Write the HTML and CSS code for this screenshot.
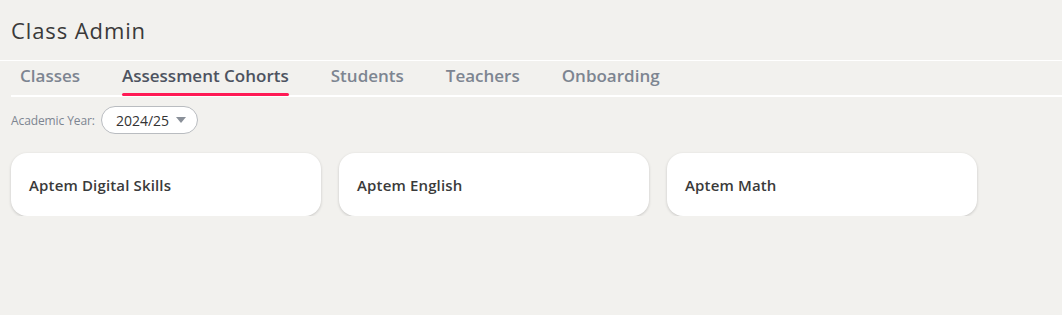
FILE: index.html
```html
<!DOCTYPE html>
<html lang="en">
<head>
    <meta charset="UTF-8">
    <meta name="viewport" content="width=device-width, initial-scale=1.0">
    <title>Class Admin</title>
    <link rel="stylesheet" href="styles.css">
</head>
<body>
    <header class="page-header">
        <h1>Class Admin</h1>
    </header>

    <nav class="tabs">
        <a class="tab">Classes</a>
        <a class="tab active">Assessment Cohorts</a>
        <a class="tab">Students</a>
        <a class="tab">Teachers</a>
        <a class="tab">Onboarding</a>
    </nav>

    <div class="filter-row">
        <label class="filter-label">Academic Year:</label>
        <div class="year-select">
            <span>2024/25</span>
            <svg width="10" height="6" viewBox="0 0 10 6"><path d="M0 0 L10 0 L5 6 Z" fill="#8a9099"/></svg>
        </div>
    </div>

    <div class="cohorts">
        <div class="cohort-card">Aptem Digital Skills</div>
        <div class="cohort-card">Aptem English</div>
        <div class="cohort-card">Aptem Math</div>
    </div>
</body>
</html>
```

FILE: styles.css
```css
body {
    background-color: #f2f1ee;
    color: #333;
    font-family: "Open Sans", Lato, sans-serif;
    margin: 0;
}
.page-header {
    padding: 15px 11px 0 11px;
    height: 45px;
    border-bottom: 1px solid #fff;
}
.page-header h1 {
    margin: 0;
    font-size: 22px;
    font-weight: 400;
    letter-spacing: 0.9px;
    color: #3a3a3a;
    line-height: 30px;
}
.tabs {
    display: flex;
    gap: 42px;
    margin-left: 11px;
    padding-left: 9px;
    border-bottom: 2px solid #fff;
    height: 34px;
}
.tab {
    font-size: 17px;
    font-weight: 600;
    color: #7d8591;
    padding-top: 3px;
    position: relative;
}
.tab.active {
    color: #4d5360;
}
.tab.active::after {
    content: "";
    position: absolute;
    left: 0;
    right: 0;
    bottom: -1px;
    height: 3px;
    border-radius: 2px;
    background-color: #ff1a55;
}
.filter-row {
    display: flex;
    align-items: center;
    gap: 6px;
    padding: 9px 11px 0 11px;
}
.filter-label {
    font-size: 12px;
    letter-spacing: -0.1px;
    color: #7d8591;
}
.year-select {
    display: flex;
    align-items: center;
    gap: 7px;
    height: 28px;
    box-sizing: border-box;
    padding: 0 11px 0 14px;
    border: 1px solid #b9bcc0;
    border-radius: 14px;
    background-color: #fff;
    font-size: 14px;
    color: #333;
}
.cohorts {
    display: flex;
    gap: 18px;
    padding: 19px 11px 0 11px;
}
.cohort-card {
    width: 310px;
    height: 63px;
    box-sizing: border-box;
    padding: 0 18px;
    display: flex;
    align-items: center;
    background-color: #fff;
    border-radius: 16px;
    box-shadow: 0 1px 3px rgba(0, 0, 0, 0.18);
    font-size: 15px;
    font-weight: 600;
    letter-spacing: 0.15px;
    color: #3a3a3a;
}
```
